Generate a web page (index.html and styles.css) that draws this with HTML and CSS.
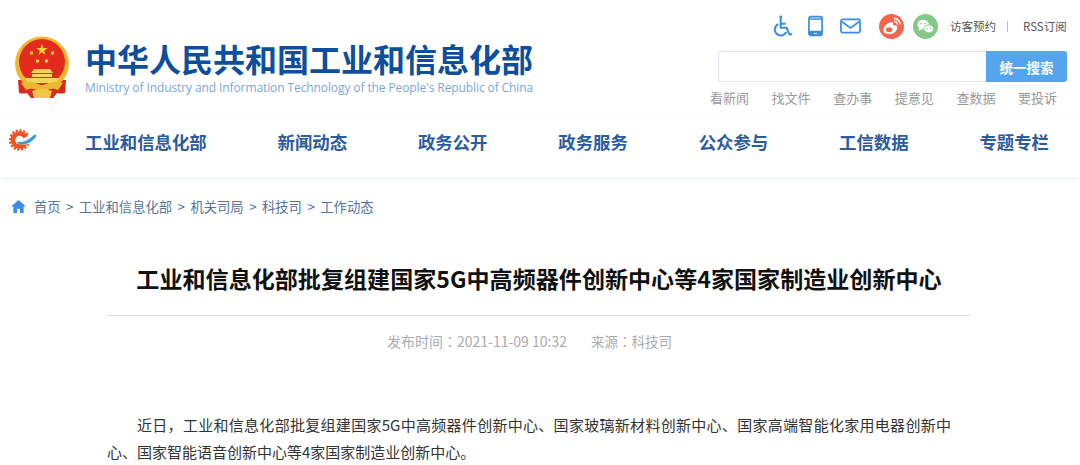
FILE: index.html
```html
<!DOCTYPE html>
<html lang="zh-CN">
<head>
  <meta charset="UTF-8" />
  <title>工业和信息化部</title>
  <link rel="stylesheet" href="styles.css">
</head>
<body>
  <header class="top">
    <div class="brand">
      <svg class="emblem" viewBox="-1 0 60 62">
        <path d="M6 44 L7 57 Q12 58 15 57 L19 62 H41 L45 57 Q48 58 53 57 L54 44 Z" fill="#d92a1c"/>
        <circle cx="30" cy="27.5" r="27" fill="#efb730"/>
        <circle cx="30" cy="26" r="23" fill="#e4291d"/>
        <polygon points="30,8 31.4,12.1 35.7,12.1 32.2,14.7 33.5,18.9 30,16.3 26.5,18.9 27.8,14.7 24.3,12.1 28.6,12.1" fill="#f5cf3c"/>
        <circle cx="19.5" cy="17" r="1.8" fill="#f5cf3c"/>
        <circle cx="40.5" cy="17" r="1.8" fill="#f5cf3c"/>
        <circle cx="25.5" cy="25" r="1.8" fill="#f5cf3c"/>
        <circle cx="34.5" cy="25" r="1.8" fill="#f5cf3c"/>
        <path d="M22 33 H38 L41 37 H19 Z M20 38 H40 V41 H20 Z M13 42 H47 L44 47 H16 Z" fill="#f6d45a"/>
        <path d="M9 47 Q20 44 30 50 Q40 44 51 47 L46 54 Q37 50 30 55 Q23 50 14 54 Z" fill="#efb730"/>
        <path d="M20 55 Q30 51 40 55 L38 62 H22 Z" fill="#f2c64a"/>
      </svg>
      <div class="brand-text">
        <div class="brand-cn">中华人民共和国工业和信息化部</div>
        <div class="brand-en">Ministry of Industry and Information Technology of the People's Republic of China</div>
      </div>
    </div>
    <div class="tools">
      <div class="tool-row">
        <svg class="tool-icon" viewBox="0 0 22 24" fill="none" stroke="#3b8ce0" stroke-width="2.2">
          <circle cx="8.5" cy="2" r="1.6" fill="#3b8ce0" stroke="none"/>
          <path d="M8.5 3 V14 H15 L18 21 H21"/>
          <path d="M6 10 A6.5 6.5 0 1 0 14.5 18.5"/>
          <path d="M8.5 9.5 H14"/>
        </svg>
        <svg class="tool-icon phone" viewBox="0 0 16 22" fill="none" stroke="#3b8ce0" stroke-width="1.8">
          <rect x="1" y="1" width="14" height="20" rx="2"/>
          <path d="M1 3.5 H15 M1 17 H15"/>
          <path d="M1 17 H15 V19 Q15 21 13 21 H3 Q1 21 1 19 Z" fill="#3b8ce0" stroke="none"/>
          <path d="M6.5 19 H9.5" stroke="#fff" stroke-width="1.2"/>
        </svg>
        <svg class="tool-icon mail" viewBox="0 0 22 16" fill="none" stroke="#3b8ce0" stroke-width="1.8">
          <rect x="1" y="1" width="20" height="14" rx="2"/>
          <path d="M2 3.5 L11 10 L20 3.5"/>
        </svg>
        <svg class="social weibo" viewBox="0 0 26 26">
          <circle cx="13" cy="13" r="13" fill="#f3654d"/>
          <path d="M4.5 16.5 C4.5 12.5 10 8 13.5 8.5 C15 9 15 10.5 14.5 12 C17 11 19.5 12 19 14.5 C18.5 18 14.5 21 10.5 21 C7 21 4.5 19.5 4.5 16.5 Z" fill="#fff"/>
          <ellipse cx="10.5" cy="16.5" rx="3.4" ry="2.6" fill="#f3654d"/>
          <path d="M15.5 4.5 A6.5 6.5 0 0 1 22 11 M15.5 7.5 A3.5 3.5 0 0 1 19 11" fill="none" stroke="#fff" stroke-width="1.5"/>
        </svg>
        <svg class="social wechat" viewBox="0 0 26 26">
          <circle cx="13" cy="13" r="13" fill="#84c987"/>
          <ellipse cx="10.5" cy="11" rx="6" ry="5" fill="#fff"/>
          <path d="M6.5 14 L6 17.5 L9.5 15.5 Z" fill="#fff"/>
          <ellipse cx="16.5" cy="15.5" rx="5" ry="4.2" fill="#fff" stroke="#84c987"/>
          <circle cx="8.5" cy="10" r=".9" fill="#84c987"/>
          <circle cx="12.5" cy="10" r=".9" fill="#84c987"/>
          <circle cx="15" cy="15" r=".8" fill="#84c987"/>
          <circle cx="18.5" cy="15" r=".8" fill="#84c987"/>
        </svg>
        <a class="tool-link">访客预约</a>
        <span class="tool-sep"></span>
        <a class="tool-link">RSS订阅</a>
      </div>
      <div class="search">
        <div class="search-input"></div>
        <button class="search-btn">统一搜索</button>
      </div>
      <div class="quick-links">
        <a>看新闻</a><a>找文件</a><a>查办事</a><a>提意见</a><a>查数据</a><a>要投诉</a>
      </div>
    </div>
  </header>

  <nav class="main-nav">
    <svg class="nav-logo" viewBox="0 0 28 24">
      <circle cx="10.5" cy="11" r="9.5" fill="none" stroke="#ee5a24" stroke-width="2.5" stroke-dasharray="2.2 1.5"/>
      <circle cx="10.5" cy="11" r="6.5" fill="none" stroke="#ef5324" stroke-width="4.5"/>
      <path d="M6 11.5 Q13 12 24 3 L28 12 Q18 17 11 15 Q7 14 6 11.5 Z" fill="#fff"/>
      <path d="M8 13 Q17 14 25 6 Q28 4.5 27 8 Q21 15.5 13 15.5 Q9 15.5 8 13 Z" fill="#3a9bd6"/>
    </svg>
    <a>工业和信息化部</a><a>新闻动态</a><a>政务公开</a><a>政务服务</a><a>公众参与</a><a>工信数据</a><a>专题专栏</a>
  </nav>

  <div class="crumbs">
    <svg class="home" viewBox="0 0 16 14"><path d="M8 0 L16 7 H13.5 V14 H9.5 V9.5 H6.5 V14 H2.5 V7 H0 Z" fill="#3b8ce8"/></svg>
    <a>首页</a><span>&gt;</span><a>工业和信息化部</a><span>&gt;</span><a>机关司局</a><span>&gt;</span><a>科技司</a><span>&gt;</span><a>工作动态</a>
  </div>

  <main class="article">
    <h1>工业和信息化部批复组建国家5G中高频器件创新中心等4家国家制造业创新中心</h1>
    <div class="meta" lang="zh-Hant"><span>发布时间：2021-11-09 10:32</span><span class="meta-source">来源：科技司</span></div>
    <div class="content">
      <p class="first-line">近日，工业和信息化部批复组建国家5G中高频器件创新中心、国家玻璃新材料创新中心、国家高端智能化家用电器创新中</p>
      <p>心、国家智能语音创新中心等4家国家制造业创新中心。</p>
    </div>
  </main>
</body>
</html>
```

FILE: styles.css
```css
* {
  box-sizing: border-box;
}

html, body {
  height: 100%;
}

body {
  margin: 0;
  background: #fff;
  overflow: hidden;
  font-family: "Noto Sans CJK SC", "Noto Sans", sans-serif;
}

/* Header */
.top {
  display: flex;
  justify-content: space-between;
  height: 118px;
  padding: 0 13px 0 11px;
}

.brand {
  display: flex;
  padding-top: 36px;
}

.emblem {
  width: 60px;
  height: 62px;
  margin-right: 14px;
}

.brand-text {
  padding-top: 3px;
}

.brand-cn {
  font-size: 32px;
  line-height: 38px;
  font-weight: 700;
  color: #0d4f9c;
  white-space: nowrap;
}

.brand-en {
  margin-top: 3px;
  font-family: "Open Sans", sans-serif;
  font-size: 12px;
  line-height: 16px;
  color: #7ba6dc;
  white-space: nowrap;
  letter-spacing: -0.1px;
}

.tools {
  width: 349px;
  padding-top: 12px;
}

.tool-row {
  display: flex;
  align-items: center;
  height: 28px;
  margin-left: 55px;
  white-space: nowrap;
}

.tool-icon {
  flex-shrink: 0;
  width: 20px;
  height: 22px;
  margin-right: 15px;
}

.tool-icon.phone {
  width: 15px;
  margin-right: 17px;
}

.tool-icon.mail {
  width: 21px;
  height: 16px;
  margin-right: 18px;
}

.social {
  flex-shrink: 0;
  width: 25px;
  height: 25px;
  margin-right: 9px;
}

.social.wechat {
  margin-right: 12px;
}

.tool-link {
  font-size: 11.5px;
  color: #555;
}

.tool-sep {
  flex-shrink: 0;
  width: 1px;
  height: 11px;
  margin: 0 15px 0 11px;
  background: #e5b77e;
}

.search {
  display: flex;
  height: 31px;
  margin-top: 11px;
}

.search-input {
  flex: 1;
  border: 1px solid #dde3ec;
  border-right: none;
  border-radius: 3px 0 0 3px;
}

.search-btn {
  width: 81px;
  border: none;
  border-radius: 0 3px 3px 0;
  background: #55a5ee;
  color: #fff;
  font-family: inherit;
  font-size: 13.5px;
  font-weight: 700;
}

.quick-links {
  display: flex;
  gap: 22.6px;
  margin-top: 7px;
  margin-left: -8px;
  font-size: 13px;
  line-height: 18px;
  color: #999;
}

/* Nav */
.main-nav {
  display: flex;
  align-items: center;
  height: 59px;
  padding: 0 0 13px 9px;
  box-shadow: 0 3px 6px rgba(60, 100, 160, 0.07);
}

.nav-logo {
  flex-shrink: 0;
  width: 28px;
  height: 24px;
  margin-right: 48px;
}

.main-nav a {
  flex-shrink: 0;
  margin-right: 70.8px;
  font-size: 17.4px;
  font-weight: 700;
  color: #2b5c9e;
  white-space: nowrap;
}

/* Breadcrumb */
.crumbs {
  display: flex;
  align-items: center;
  height: 20px;
  margin-top: 19px;
  padding-left: 11px;
  font-size: 13.3px;
  color: #55739c;
}

.home {
  width: 15px;
  height: 13px;
  margin-right: 8px;
}

.crumbs span {
  margin: 0 5.5px;
}

/* Article */
.article {
  width: 864px;
  margin-left: 107px;
}

h1 {
  margin: 0;
  padding: 45px 0 20px;
  border-bottom: 1px solid #ddd;
  font-size: 23.08px;
  line-height: 34px;
  font-weight: 700;
  color: #111;
  text-align: center;
  white-space: nowrap;
}

.meta {
  display: flex;
  justify-content: center;
  align-items: baseline;
  gap: 24px;
  margin-top: 15px;
  padding-right: 19px;
  font-family: "Noto Sans CJK TC", sans-serif;
  font-size: 14px;
  line-height: 20px;
  color: #aaa;
}

.meta-source {
  font-size: 13.5px;
}

.content {
  width: 844px;
  margin-top: 60px;
  font-size: 15px;
  line-height: 27px;
  color: #333;
}

.content p {
  margin: 0;
  white-space: nowrap;
}

.content .first-line {
  text-indent: 30px;
  white-space: normal;
  text-align: justify;
  text-align-last: justify;
}
```
